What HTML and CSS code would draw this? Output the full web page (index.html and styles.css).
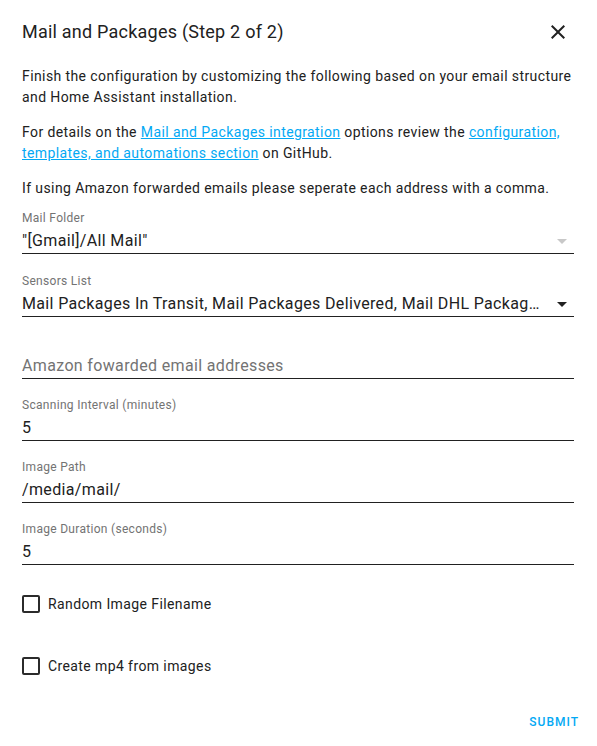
FILE: index.html
```html
<!doctype html>
<html>
<head>
    <meta charset="utf-8" />
    <title>Mail and Packages</title>
    <link rel="stylesheet" href="styles.css">
</head>
<body>
<div class="dialog">
    <div class="dialog__header">
        <h2 class="dialog__title">Mail and Packages (Step 2 of 2)</h2>
        <button class="dialog__close" aria-label="Close">
            <svg viewBox="0 0 24 24" width="24" height="24"><path d="M19,6.41L17.59,5L12,10.59L6.41,5L5,6.41L10.59,12L5,17.59L6.41,19L12,13.41L17.59,19L19,17.59L13.41,12L19,6.41Z"/></svg>
        </button>
    </div>
    <div class="dialog__content">
        <div class="intro">
            <p>Finish the configuration by customizing the following based on your email structure and Home Assistant installation.</p>
            <p>For details on the <a href="#">Mail and Packages integration</a> options review the <a href="#">configuration, templates, and automations section</a> on GitHub.</p>
            <p>If using Amazon forwarded emails please seperate each address with a comma.</p>
        </div>

        <div class="field">
            <div class="field__label">Mail Folder</div>
            <div class="field__input">
                <span class="field__value">"[Gmail]/All Mail"</span>
                <svg class="field__arrow field__arrow--light" viewBox="0 0 24 24"><path d="M7,10L12,15L17,10H7Z"/></svg>
            </div>
        </div>
        <div class="field">
            <div class="field__label">Sensors List</div>
            <div class="field__input">
                <span class="field__value">Mail Packages In Transit, Mail Packages Delivered, Mail DHL Packages Delivered, Mail DHL Packages In Transit</span>
                <svg class="field__arrow" viewBox="0 0 24 24"><path d="M7,10L12,15L17,10H7Z"/></svg>
            </div>
        </div>
        <div class="field">
            <div class="field__label"></div>
            <div class="field__input">
                <span class="field__value field__value--placeholder">Amazon fowarded email addresses</span>
            </div>
        </div>
        <div class="field">
            <div class="field__label">Scanning Interval (minutes)</div>
            <div class="field__input"><span class="field__value">5</span></div>
        </div>
        <div class="field">
            <div class="field__label">Image Path</div>
            <div class="field__input"><span class="field__value">/media/mail/</span></div>
        </div>
        <div class="field">
            <div class="field__label">Image Duration (seconds)</div>
            <div class="field__input"><span class="field__value">5</span></div>
        </div>

        <label class="check">
            <span class="check__box"></span>
            <span class="check__label">Random Image Filename</span>
        </label>
        <label class="check">
            <span class="check__box"></span>
            <span class="check__label">Create mp4 from images</span>
        </label>
    </div>
    <div class="dialog__actions">
        <button class="btn-text">Submit</button>
    </div>
</div>
</body>
</html>
```

FILE: styles.css
```css
body {
    margin: 0;
    background-color: #fff;
    color: #212121;
    font-family: Roboto, "Noto Sans", sans-serif;
}
.dialog {
    width: 597px;
}
.dialog__header {
    display: flex;
    align-items: center;
    justify-content: space-between;
    padding: 16px 27px 0 22px;
    height: 32px;
}
.dialog__title {
    margin: 0;
    font-size: 18px;
    font-weight: 400;
    line-height: 32px;
    letter-spacing: 0.0125em;
    color: #212121;
}
.dialog__close {
    border: 0;
    padding: 0;
    background: none;
    width: 24px;
    height: 24px;
}
.dialog__close svg {
    display: block;
    fill: #212121;
}
.dialog__content {
    padding: 0 23px 0 22px;
}
.intro {
    margin: 18px -6px 1px 0;
    font-size: 14px;
    line-height: 21px;
    letter-spacing: 0.4px;
}
.intro p {
    margin: 0;
}
.intro p + p {
    margin-top: 14px;
}
.intro a {
    color: #03a9f4;
}
.field {
    padding: 8px 0;
}
.intro + .field {
    padding-bottom: 9px;
}
.field__label {
    height: 20px;
    font-size: 12px;
    line-height: 20px;
    letter-spacing: 0.3px;
    color: #737373;
}
.field__input {
    display: flex;
    align-items: center;
    height: 25px;
    border-bottom: 1px solid #212121;
}
.field__value {
    flex: 1;
    min-width: 0;
    font-size: 16px;
    line-height: 24px;
    white-space: nowrap;
    overflow: hidden;
    text-overflow: ellipsis;
    letter-spacing: 0.35px;
}
.field__value--placeholder {
    color: #737373;
}
.field__arrow {
    width: 24px;
    height: 24px;
    margin-left: 4px;
    fill: #212121;
}
.field__arrow--light {
    fill: #c8c8c8;
}
.check {
    display: flex;
    align-items: center;
    height: 62px;
}
.check__box {
    box-sizing: border-box;
    width: 18px;
    height: 18px;
    border: 2px solid #2b2b2b;
    border-radius: 2px;
}
.check__label {
    margin-left: 8px;
    font-size: 14px;
    letter-spacing: 0.4px;
}
.dialog__actions {
    display: flex;
    justify-content: flex-end;
    padding: 7px 10px 0 0;
}
.btn-text {
    border: 0;
    background: none;
    height: 36px;
    padding: 0 8px;
    font-family: Roboto, sans-serif;
    font-size: 12px;
    font-weight: 500;
    letter-spacing: 1px;
    text-transform: uppercase;
    color: #03a9f4;
}
```
